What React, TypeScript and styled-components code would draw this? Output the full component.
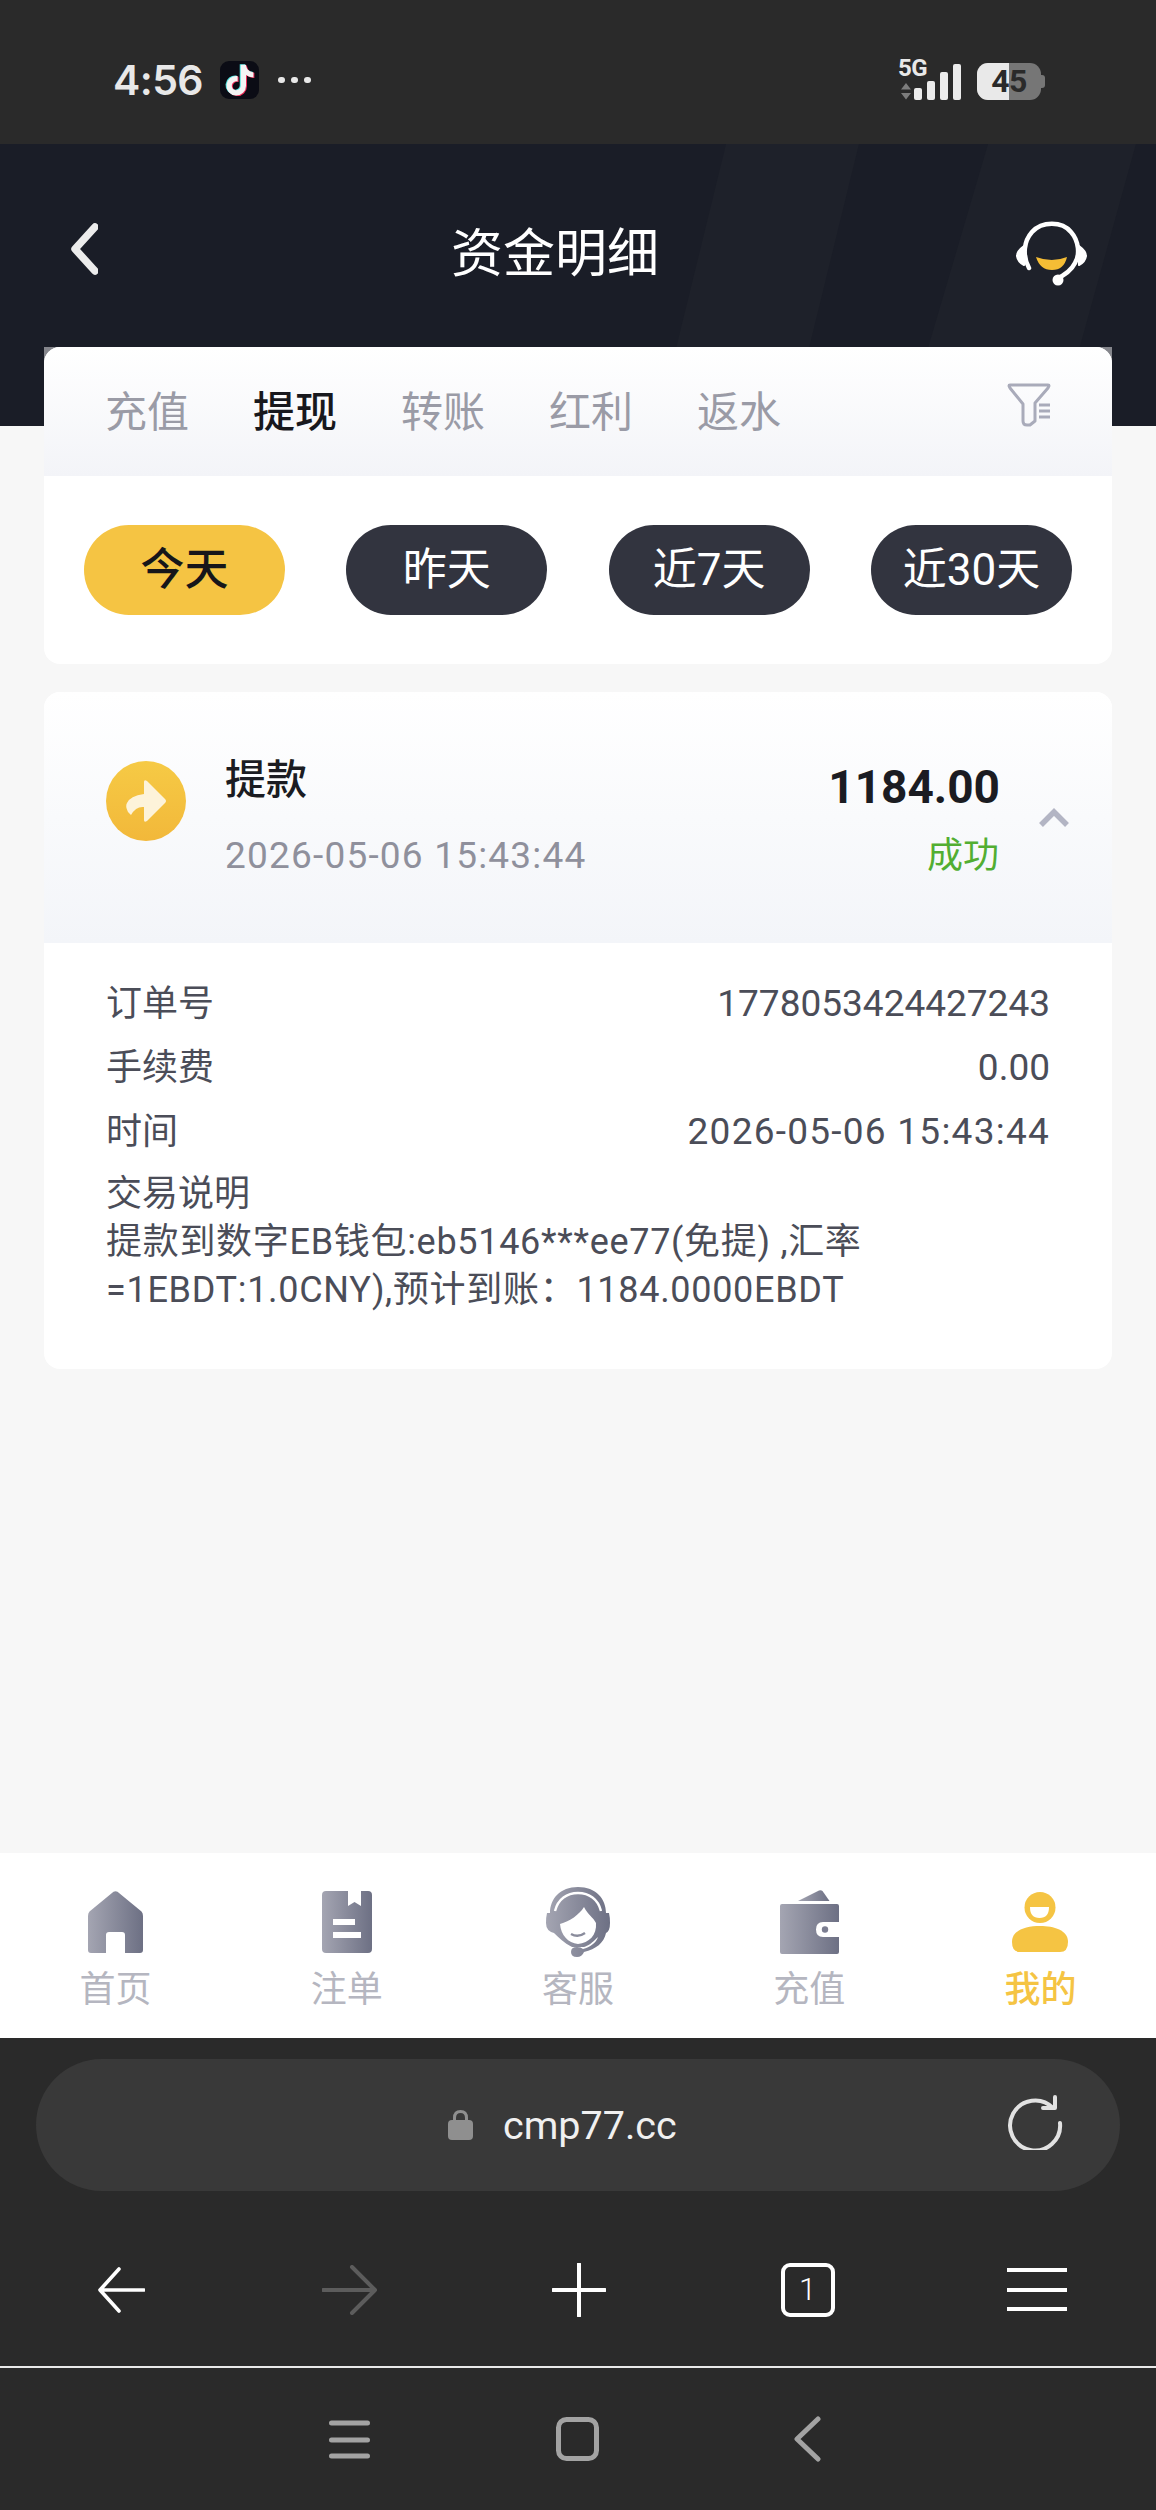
import React from "react";
import styled, { createGlobalStyle } from "styled-components";

const cjk = `Roboto, "Noto Sans CJK SC", sans-serif`;

const Global = createGlobalStyle`
  html, body { margin: 0; padding: 0; background: #2a2a2a; }
  * { box-sizing: border-box; }
  body { font-family: ${cjk}; }
`;

const Page = styled.div`
  width: 1156px; height: 2510px; display: flex; flex-direction: column; overflow: hidden;
`;

/* Status bar */
const StatusBar = styled.div`
  height: 144px; background: #2a2a2a; display: flex; align-items: center; justify-content: space-between;
  padding: 16px 115px 0 113px; color: #e8e8e8; flex: none;
`;
const StatusLeft = styled.div`display: flex; align-items: center;`;
const Time = styled.span`font: 600 41px/1 Inter, Roboto, sans-serif; letter-spacing: -0.6px; width: 107px;`;
const Dots = styled.div`display: flex; gap: 6.5px; margin-left: 19px;`;
const Dot = styled.i`width: 6.5px; height: 6.5px; border-radius: 50%; background: #e8e8e8;`;
const StatusRight = styled.div`display: flex; align-items: flex-end; height: 40px;`;
const NetColumn = styled.div`display: flex; flex-direction: column; width: 30px; height: 41px; margin-right: -14px; margin-top: -2px;`;
const FiveG = styled.span`font: 700 24px/18px Roboto, sans-serif; letter-spacing: -0.5px;`;
const Bars = styled.div`display: flex; align-items: flex-end; gap: 5px;`;
const Bar = styled.i<{ $h: number }>`width: 8px; height: ${p => p.$h}px; background: #ececec; border-radius: 2px;`;
const Battery = styled.div`
  position: relative; width: 64px; height: 37px; margin-left: 16px; border-radius: 11px; background: #767676; overflow: visible;
  &::before { content: ""; position: absolute; left: 0; top: 0; bottom: 0; width: 32px; border-radius: 11px 0 0 11px; background: #e9e9e9; }
  &::after { content: ""; position: absolute; right: -4px; top: 12px; width: 4px; height: 13px; border-radius: 0 3px 3px 0; background: #767676; }
`;
const BatteryText = styled.span`
  position: absolute; inset: 0; display: flex; align-items: center; justify-content: center;
  font: 700 32px/37px Roboto, sans-serif; color: #2a2a2a; letter-spacing: -0.5px;
`;

/* Header */
const Header = styled.div`
  position: relative; height: 282px; flex: none; background: #1a1d27; display: flex; align-items: flex-start;
  justify-content: space-between; padding: 77px 69px 0 64px; color: #fff; overflow: hidden;
`;
const HeaderDecor = styled.svg`position: absolute; inset: 0; width: 100%; height: 100%;`;
const Title = styled.h1`
  position: relative; margin: 2px 4px 0 0; font: 400 52px/64px ${cjk}; letter-spacing: 0;
`;
const HeaderIcon = styled.svg`position: relative; display: block; flex: none;`;

/* Main */
const Main = styled.main`
  flex: 1; background: #f7f7f7; padding: 0 44px; display: flex; flex-direction: column; gap: 28px; min-height: 0;
`;
const CardBacking = styled.div`
  margin-top: -79px; position: relative;
  background: linear-gradient(#85868c 0 12px, transparent 12px);
`;
const Card = styled.section`background: #fff; border-radius: 16px; overflow: hidden;`;
const TabRow = styled.div`
  height: 129px; padding: 0 61px 0 61px; display: flex; align-items: center; gap: 64px;
  background: linear-gradient(#fff, #f3f4f8);
`;
const Tab = styled.span<{ $active?: boolean }>`
  font: ${p => (p.$active ? 500 : 400)} 42px/60px ${cjk}; color: ${p => (p.$active ? "#18181d" : "#9a9ba6")};
  white-space: nowrap; margin-top: 3px;
`;
const FilterIcon = styled.svg`margin-left: auto; margin-top: -13px; flex: none;`;
const Pills = styled.div`padding: 49px 40px; display: flex; justify-content: space-between;`;
const Pill = styled.div<{ $active?: boolean }>`
  width: 201px; height: 90px; border-radius: 45px; display: flex; align-items: center; justify-content: center;
  background: ${p => (p.$active ? "#f5c443" : "#32343f")}; color: ${p => (p.$active ? "#16161a" : "#fff")};
  font: ${p => (p.$active ? 500 : 400)} 44px/1 ${cjk};
`;

const RecordHead = styled.div`
  height: 251px; padding: 0 0 0 62px; display: flex; align-items: center; background: linear-gradient(#fff, #f3f5f9);
`;
const RecordIcon = styled.svg`flex: none; margin-top: -33px;`;
const RecordText = styled.div`display: flex; flex-direction: column; margin-left: 39px; margin-top: -4px;`;
const RecordTitle = styled.span`font: 500 41px/60px ${cjk}; color: #1b1c22;`;
const RecordDate = styled.span`font: 400 37px/50px ${cjk}; letter-spacing: 1.2px; color: #8f909c; margin-top: 21px; white-space: nowrap;`;
const RecordRight = styled.div`margin-left: auto; display: flex; flex-direction: column; align-items: flex-end; margin-top: 2px;`;
const Amount = styled.span`font: 700 46px/60px Roboto, sans-serif; color: #1b1c22;`;
const Status = styled.span`font: 400 36px/50px ${cjk}; color: #52ae32; margin-top: 14px; margin-right: 1px;`;
const Chevron = styled.svg`flex: none; margin: 0 42px 0 38px;`;

const Details = styled.div`padding: 29px 62px 55px 62px; color: #4b4d58; font: 400 36px/64px ${cjk};`;
const DetailRow = styled.div`display: flex; justify-content: space-between; white-space: nowrap;`;
const Value = styled.span<{ $spaced?: boolean }>`font-size: 37px; letter-spacing: ${p => (p.$spaced ? "1.25px" : "0")};`;
const Label = styled.div`line-height: 48px; margin-top: 6px;`;
const Description = styled.div`line-height: 48px; white-space: nowrap; letter-spacing: 0.7px;`;

/* Bottom tabs */
const TabBar = styled.nav`
  height: 185px; flex: none; background: #fff; display: grid; grid-template-columns: repeat(5, 1fr); padding-top: 34px;
`;
const TabItem = styled.div<{ $active?: boolean }>`
  display: flex; flex-direction: column; align-items: center; color: ${p => (p.$active ? "#f5c443" : "#b5b6c0")};
  font: ${p => (p.$active ? 500 : 400)} 36px/40px ${cjk};
`;
const TabIconBox = styled.div`height: 70px; display: flex; align-items: center; justify-content: center; margin-bottom: 13px;`;

/* Browser */
const Browser = styled.div`height: 472px; flex: none; background: #2a2a2a; display: flex; flex-direction: column;`;
const UrlBar = styled.div`
  margin: 21px 36px 0 36px; height: 132px; border-radius: 66px; background: #393939; display: flex; align-items: center;
  padding: 0 57px 0 412px; color: #f0f0f0; font: 400 39.5px/1 Roboto, sans-serif; flex: none;
`;
const UrlText = styled.span`margin: 2px 0 0 30px;`;
const Reload = styled.svg`margin-left: auto; margin-top: -6px;`;
const Toolbar = styled.div`
  height: 177px; display: grid; grid-template-columns: repeat(5, 229px); padding: 22px 0 0 6px; align-items: center;
  border-bottom: 2px solid #e9e9e9; flex: none;
`;
const ToolCell = styled.div`display: flex; align-items: center; justify-content: center;`;
const TabCount = styled.div`
  width: 54px; height: 54px; border: 4px solid #fff; border-radius: 9px; display: flex; align-items: center; justify-content: center;
  color: #fff; font: 300 31px/1 Roboto, sans-serif;
`;
const SystemNav = styled.div`flex: 1; display: flex; align-items: center; justify-content: center; gap: 186px; padding-right: 6px;`;
const SystemBack = styled.svg`margin-left: 8px;`;

const Grad = ({ id }: { id: string }) => (
  <defs>
    <linearGradient id={id} x1="0" y1="0" x2="1" y2="0">
      <stop offset="0" stopColor="#a4a5b2" />
      <stop offset="1" stopColor="#6d7084" />
    </linearGradient>
  </defs>
);

const TT = "M448,209.91a210.06,210.06,0,0,1-122.77-39.25V349.38A162.55,162.55,0,1,1,185,188.31V278.2a74.62,74.62,0,1,0,52.23,71.18V0l88,0a121.18,121.18,0,0,0,1.86,22.17h0A122.18,122.18,0,0,0,381,102.39a121.43,121.43,0,0,0,67,20.14Z";

const TikTok = () => (
  <svg width="39" height="38" viewBox="0 0 39 38" style={{ display: "block" }}>
    <rect width="39" height="38" rx="9" fill="#0b0c15" />
    <g transform="translate(5.5 3.2) scale(0.06)"><path d={TT} fill="#4fe3e0" /></g>
    <g transform="translate(7.5 4.4) scale(0.06)"><path d={TT} fill="#ee2a56" /></g>
    <g transform="translate(6.5 3.8) scale(0.06)"><path d={TT} fill="#f4f4f4" /></g>
  </svg>
);

const Home = () => (
  <svg width="55" height="62" viewBox="0 0 55 62">
    <Grad id="g1" />
    <path fill="url(#g1)" d="M25.5.8 Q27.5-.4 29.5.8 L53.5 20.5 Q55 22 55 25 V59 Q55 62 52 62 H37 V44 Q37 41 34 41 H21 Q18 41 18 44 V62 H3 Q0 62 0 59 V25 Q0 22 1.5 20.5 Z" />
  </svg>
);
const Book = () => (
  <svg width="50" height="62" viewBox="0 0 50 62">
    <Grad id="g2" />
    <path fill="url(#g2)" fillRule="evenodd" d="M4 0 H26 V15 L32.5 11 L39 15 V0 H46 Q50 0 50 4 V58 Q50 62 46 62 H4 Q0 62 0 58 V4 Q0 0 4 0 Z M11 28 V34 H33 V28 Z M11 41 V47 H39 V41 Z" />
  </svg>
);
const Agent = () => (
  <svg width="64" height="70" viewBox="0 0 64 70">
    <Grad id="g3" />
    <path fill="url(#g3)" d="M32 0 C50 0 60 12 60 26 H63 Q64 30 64 36 Q64 44 60 46 C58 56 50 62 38 65 Q36 70 31 70 Q25 70 25 65 Q25 60 31 60 Q35 60 37 62 C44 60 50 56 52 50 C46 56 42 59 38 60 H26 C18 56 12 50 8 46 Q0 44 0 36 Q0 30 1 26 H4 C4 12 14 0 32 0 Z" />
    <path d="M9 24 C12 12 21 6 32 6 C43 6 52 12 55 24" fill="none" stroke="#fff" strokeWidth="2.4" />
    <path fill="#fff" d="M14 37 C24 34 33 28 38 20 C42 28 47 30 50 36 C51 48 43 56 32 57 C22 56 15 48 14 37 Z" />
    <path d="M25 47 Q32 51 39 46" fill="none" stroke="#8a8c9c" strokeWidth="2.4" />
  </svg>
);
const Wallet = () => (
  <svg width="59" height="64" viewBox="0 0 59 64">
    <Grad id="g4" />
    <path fill="url(#g4)" d="M18 11 L39 .5 Q41 -.4 42.5 1 L49.5 11 Z" />
    <path fill="url(#g4)" fillRule="evenodd" d="M2 14 H57 Q59 14 59 16 V32 H43 Q36 32 36 39.5 Q36 47 43 47 H59 V62 Q59 64 57 64 H2 Q0 64 0 62 V16 Q0 14 2 14 Z" />
    <circle cx="45" cy="39.5" r="3.2" fill="#7c7e91" />
  </svg>
);
const Person = () => (
  <svg width="56" height="60" viewBox="0 0 56 60">
    <circle cx="28" cy="15.5" r="15.5" fill="#f5c443" />
    <path fill="#fff" d="M18 15 H37 Q37 26 27.5 26 Q18 26 18 15 Z" />
    <path fill="#f5c443" d="M0 50 C0 38 14 34 28 34 C42 34 56 38 56 50 Q56 60 48 60 H8 Q0 60 0 50 Z" />
  </svg>
);

export default function App() {
  return (
    <Page>
      <Global />
      <StatusBar>
        <StatusLeft>
          <Time>4:56</Time>
          <TikTok />
          <Dots><Dot /><Dot /><Dot /></Dots>
        </StatusLeft>
        <StatusRight>
          <NetColumn>
            <FiveG>5G</FiveG>
            <svg width="12" height="17" viewBox="0 0 12 17" style={{ marginLeft: 2, marginTop: 6 }}>
              <path d="M6 0 L11 6.5 H1 Z M1 10 H11 L6 16.5 Z" fill="#7d7d7d" />
            </svg>
          </NetColumn>
          <Bars>
            <Bar $h={12} /><Bar $h={19} /><Bar $h={28} /><Bar $h={36} />
          </Bars>
          <Battery><BatteryText>45</BatteryText></Battery>
        </StatusRight>
      </StatusBar>

      <Header>
        <HeaderDecor viewBox="0 0 1156 282" preserveAspectRatio="none" aria-hidden="true">
          <path d="M726 0 H859 L790 282 H657 Z" fill="#1e212a" />
          <path d="M988 0 H1136 L1058 282 H905 Z" fill="#1e212a" />
        </HeaderDecor>
        <HeaderIcon width="34" height="56" viewBox="0 0 34 56">
          <path d="M31 6 L11 28 L31 50" fill="none" stroke="#ececec" strokeWidth="7.5" strokeLinejoin="round" strokeLinecap="round" />
        </HeaderIcon>
        <Title>资金明细</Title>
        <HeaderIcon width="71" height="66" viewBox="0 0 71 66">
          <path d="M13 47 C6 34 8 20 16 11 C26 0 46 0 55 11 C63 20 64 34 59 42 C55 50 47 55 40 58" fill="none" stroke="#fff" strokeWidth="4.5" strokeLinecap="round" />
          <path d="M8 25 Q1 30 1 35 Q2 41 8 44 Z M63 25 Q70 30 70 35 Q69 41 63 44 Z" fill="#fff" stroke="#fff" strokeWidth="2" strokeLinejoin="round" />
          <circle cx="42" cy="59" r="5.5" fill="#fff" />
          <path d="M20 36 Q36 42 51 36 Q48 49 36 49 Q24 49 20 36 Z" fill="#f5bd35" />
        </HeaderIcon>
      </Header>

      <Main>
        <CardBacking>
          <Card>
            <TabRow>
              <Tab>充值</Tab>
              <Tab $active>提现</Tab>
              <Tab>转账</Tab>
              <Tab>红利</Tab>
              <Tab>返水</Tab>
              <FilterIcon width="44" height="44" viewBox="0 0 44 44">
                <path d="M3 2 H41 Q43 2 41 5 L28 20 V38 L23 42 H20 Q16 42 16 38 V21 L3 5 Q1 2 3 2 Z" fill="none" stroke="#a9abba" strokeWidth="3" strokeLinejoin="round" />
                <path d="M32 22 H43 M32 28 H43 M32 34 H43" stroke="#a9abba" strokeWidth="3" />
              </FilterIcon>
            </TabRow>
            <Pills>
              <Pill $active>今天</Pill>
              <Pill>昨天</Pill>
              <Pill>近7天</Pill>
              <Pill>近30天</Pill>
            </Pills>
          </Card>
        </CardBacking>

        <Card>
          <RecordHead>
            <RecordIcon width="80" height="80" viewBox="0 0 80 80">
              <defs>
                <linearGradient id="gy" x1="0" y1="0" x2="0" y2="1">
                  <stop offset="0" stopColor="#f6ca45" />
                  <stop offset="1" stopColor="#f2b83a" />
                </linearGradient>
              </defs>
              <circle cx="40" cy="40" r="40" fill="url(#gy)" />
              <path d="M38 21 Q38 18 41 20 L59 38 Q61 40 59 42 L41 60 Q38 62 38 59 V46 Q30 45 25 54 L22 51 Q19 45 21 42 Q24 35 38 33 Z" fill="#fdf3da" />
            </RecordIcon>
            <RecordText>
              <RecordTitle>提款</RecordTitle>
              <RecordDate>2026-05-06 15:43:44</RecordDate>
            </RecordText>
            <RecordRight>
              <Amount>1184.00</Amount>
              <Status>成功</Status>
            </RecordRight>
            <Chevron width="32" height="20" viewBox="0 0 32 20">
              <path d="M3 17 L16 4 L29 17" fill="none" stroke="#b3b5c4" strokeWidth="5.5" />
            </Chevron>
          </RecordHead>
          <Details>
            <DetailRow><span>订单号</span><Value>1778053424427243</Value></DetailRow>
            <DetailRow><span>手续费</span><Value>0.00</Value></DetailRow>
            <DetailRow><span>时间</span><Value $spaced>2026-05-06 15:43:44</Value></DetailRow>
            <Label>交易说明</Label>
            <Description>
              提款到数字EB钱包:eb5146***ee77(免提) ,汇率
              <br />
              =1EBDT:1.0CNY),预计到账：1184.0000EBDT
            </Description>
          </Details>
        </Card>
      </Main>

      <TabBar>
        <TabItem><TabIconBox><Home /></TabIconBox>首页</TabItem>
        <TabItem><TabIconBox><Book /></TabIconBox>注单</TabItem>
        <TabItem><TabIconBox><Agent /></TabIconBox>客服</TabItem>
        <TabItem><TabIconBox><Wallet /></TabIconBox>充值</TabItem>
        <TabItem $active><TabIconBox><Person /></TabIconBox>我的</TabItem>
      </TabBar>

      <Browser>
        <UrlBar>
          <svg width="25" height="30" viewBox="0 0 25 30">
            <path d="M6.5 14 V8 Q6.5 1.5 12.5 1.5 Q18.5 1.5 18.5 8 V14" fill="none" stroke="#8f8f8f" strokeWidth="3" />
            <rect y="10" width="25" height="20" rx="4" fill="#8f8f8f" />
          </svg>
          <UrlText>cmp77.cc</UrlText>
          <Reload width="56" height="56" viewBox="0 0 56 56">
            <path d="M46 14 A25 25 0 1 0 53 29" fill="none" stroke="#e2e2e2" strokeWidth="4" strokeLinecap="round" />
            <path d="M36 14 H48 V3" fill="none" stroke="#e2e2e2" strokeWidth="4" strokeLinecap="round" strokeLinejoin="round" />
          </Reload>
        </UrlBar>
        <Toolbar>
          <ToolCell>
            <svg width="48" height="46" viewBox="0 0 48 46">
              <path d="M22 2 L3 23 L22 44 M4 23 H47" fill="none" stroke="#fff" strokeWidth="3.6" strokeLinecap="round" strokeLinejoin="round" />
            </svg>
          </ToolCell>
          <ToolCell>
            <svg width="56" height="50" viewBox="0 0 56 50">
              <path d="M30 2 L53 25 L30 48 M1 25 H53" fill="none" stroke="#5c5c5c" strokeWidth="4" strokeLinecap="round" strokeLinejoin="round" />
            </svg>
          </ToolCell>
          <ToolCell>
            <svg width="54" height="54" viewBox="0 0 54 54">
              <path d="M27 1 V53 M1 27 H53" fill="none" stroke="#fff" strokeWidth="4" strokeLinecap="round" />
            </svg>
          </ToolCell>
          <ToolCell><TabCount>1</TabCount></ToolCell>
          <ToolCell>
            <svg width="60" height="44" viewBox="0 0 60 44">
              <path d="M0 2 H60 M0 22 H60 M0 41 H60" stroke="#fff" strokeWidth="4" />
            </svg>
          </ToolCell>
        </Toolbar>
        <SystemNav>
          <svg width="41" height="39" viewBox="0 0 41 39">
            <path d="M2.5 3 H38.5 M2.5 20 H38.5 M2.5 36 H38.5" stroke="#a3a3a3" strokeWidth="5" strokeLinecap="round" />
          </svg>
          <svg width="43" height="44" viewBox="0 0 43 44">
            <rect x="2.5" y="2.5" width="38" height="39" rx="8" fill="none" stroke="#a3a3a3" strokeWidth="5" />
          </svg>
          <SystemBack width="28" height="46" viewBox="0 0 28 46">
            <path d="M25 3 L4 23 L25 43" fill="none" stroke="#a3a3a3" strokeWidth="5" strokeLinecap="round" strokeLinejoin="round" />
          </SystemBack>
        </SystemNav>
      </Browser>
    </Page>
  );
}
